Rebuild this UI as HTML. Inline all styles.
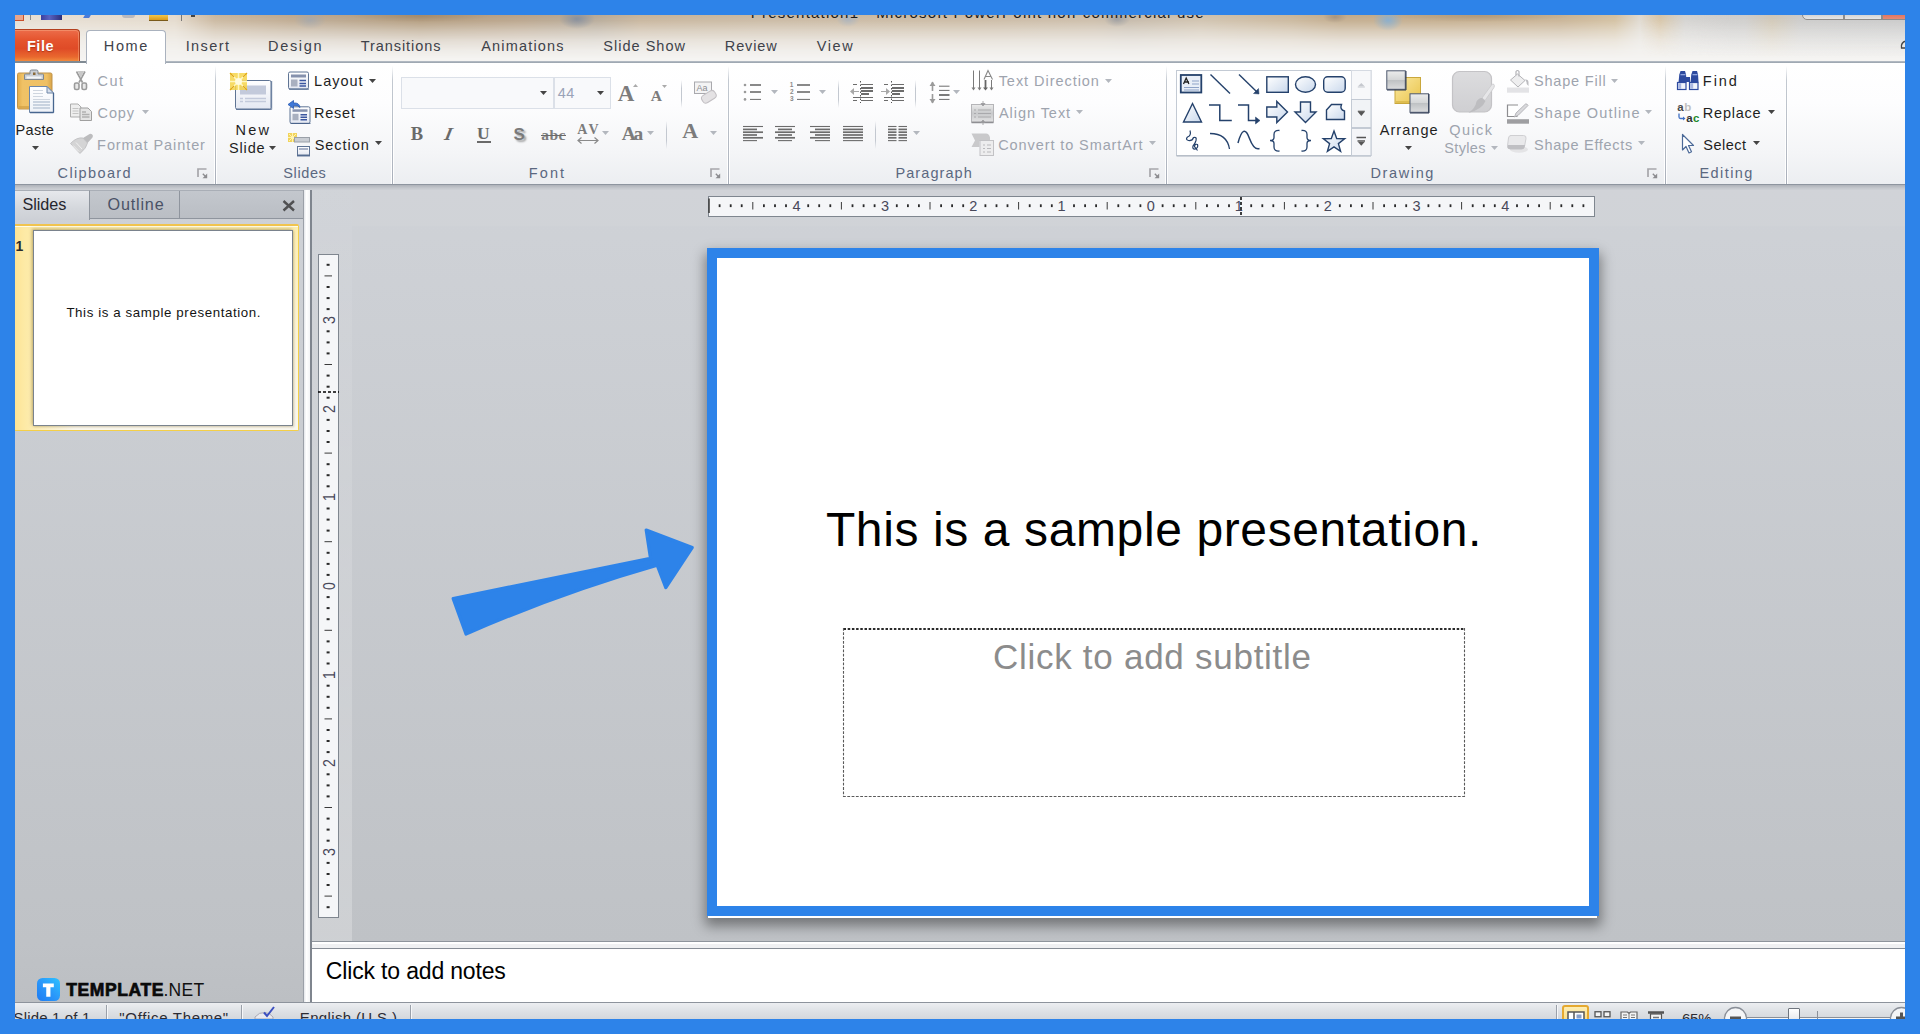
<!DOCTYPE html>
<html lang="en"><head><meta charset="utf-8"><title>PowerPoint</title>
<style>
html,body{margin:0;padding:0;}
body{width:1920px;height:1034px;background:#2d83e9;overflow:hidden;position:relative;font-family:"Liberation Sans",sans-serif;}
.a{position:absolute;display:block;}
.t{position:absolute;white-space:nowrap;display:block;}
#app{position:absolute;left:0;top:0;width:1920px;height:1034px;overflow:hidden;}
.fr{position:absolute;background:#2d83e9;z-index:50;}
</style></head>
<body>
<div id="app">
<div class="a" style="left:15px;top:15px;width:1890px;height:47px;background:#f5f4f2;"></div>
<div class="a" style="left:15px;top:15px;width:1890px;height:44px;background:linear-gradient(to right,#e6ded2 0px,#e4dacc 160px,#c9b69d 200px,#bda88e 275px,#b9a58c 310px,#b09879 405px,#b8a288 505px,#b5a896 580px,#c6b39a 625px,#c9b8a1 745px,#cab9a2 945px,#cbbca8 1080px,#c4b8a8 1113px,#cfc1ad 1185px,#c9b69b 1275px,#c1aa8a 1325px,#c3ab8a 1435px,#c7b192 1545px,#d2bf9f 1600px,#dfd9d0 1625px,#d9c4a2 1645px,#d9d7d4 1670px,#d8d6d3 1730px,#dccaa8 1757px,#d2d1cf 1785px,#cfcfcf 1875px);-webkit-mask-image:linear-gradient(to bottom,rgba(0,0,0,1) 0px,rgba(0,0,0,.9) 6px,rgba(0,0,0,.55) 16px,rgba(0,0,0,.25) 26px,rgba(0,0,0,.08) 36px,rgba(0,0,0,0) 44px);mask-image:linear-gradient(to bottom,rgba(0,0,0,1) 0px,rgba(0,0,0,.9) 6px,rgba(0,0,0,.55) 16px,rgba(0,0,0,.25) 26px,rgba(0,0,0,.08) 36px,rgba(0,0,0,0) 44px);"></div>
<div class="a" style="left:1640px;top:15px;width:265px;height:42px;background:linear-gradient(to bottom,rgba(196,196,196,.55),rgba(210,210,210,.35) 45%,rgba(230,228,226,0));-webkit-mask-image:linear-gradient(to right,transparent,#000 90px);mask-image:linear-gradient(to right,transparent,#000 90px);"></div>
<div class="a" style="left:294px;top:11px;width:32px;height:18px;background:radial-gradient(closest-side,rgba(150,165,185,.55),rgba(255,255,255,0));"></div>
<div class="a" style="left:559px;top:9px;width:36px;height:20px;background:radial-gradient(closest-side,rgba(110,130,160,.65),rgba(255,255,255,0));"></div>
<div class="a" style="left:836px;top:11px;width:24px;height:16px;background:radial-gradient(closest-side,rgba(150,175,205,.6),rgba(255,255,255,0));"></div>
<div class="a" style="left:1104px;top:11px;width:26px;height:16px;background:radial-gradient(closest-side,rgba(130,140,155,.6),rgba(255,255,255,0));"></div>
<div class="a" style="left:1373px;top:9px;width:30px;height:22px;background:radial-gradient(closest-side,rgba(120,175,225,.75),rgba(255,255,255,0));"></div>
<div class="a" style="left:1323px;top:11px;width:24px;height:12px;background:radial-gradient(closest-side,rgba(120,110,105,.4),rgba(255,255,255,0));"></div>
<div class="a" style="left:350px;top:10px;width:140px;height:12px;background:radial-gradient(closest-side,rgba(120,95,65,.25),rgba(255,255,255,0));"></div>
<div class="a" style="left:1390px;top:10px;width:180px;height:12px;background:radial-gradient(closest-side,rgba(120,95,65,.25),rgba(255,255,255,0));"></div>
<div class="a" style="left:15px;top:61.3px;width:1890px;height:1.9px;background:linear-gradient(to bottom,#b9c0c8,#97a1ab);"></div>
<div class="a" style="left:15px;top:63px;width:1890px;height:121px;background:linear-gradient(to bottom,#ffffff 0px,#fdfdfe 40px,#f4f5f7 90px,#eceef1 121px);"></div>
<div class="a" style="left:15px;top:184px;width:1890px;height:1px;background:#8e959f;"></div>
<div class="a" style="left:15px;top:185px;width:1890px;height:5px;background:linear-gradient(to bottom,#aeb2b9,#c4c7cc 60%,#cdd0d5);"></div>
<div class="a" style="left:15px;top:190px;width:1890px;height:813px;background:linear-gradient(to bottom,#cfd2d7,#bfc2c6 752px,#bcbfc3);"></div>
<div class="a" style="left:401px;top:77px;width:152.5px;height:31.5px;background:#f8f9fb;border:1.600px solid #dbe0e8;box-sizing:border-box;"></div>
<div class="a" style="left:553.5px;top:77px;width:57.5px;height:31.5px;background:#f8f9fb;border:1.600px solid #dbe0e8;box-sizing:border-box;"></div>
<span class="t" style="left:750.77px;top:3px;font:400 15px/20px 'Liberation Sans',sans-serif;color:#1a1a1a;letter-spacing:1.223px;">Presentation1 - Microsoft PowerPoint non-commercial use</span>
<div class="a" style="left:15px;top:15px;width:8px;height:5px;background:#e9a58a;border-right:1px solid #c9502a;border-bottom:1px solid #c9502a;"></div>
<div class="a" style="left:30px;top:15px;width:1px;height:5px;background:#8a8a8a;"></div>
<div class="a" style="left:41px;top:15px;width:21px;height:5px;background:linear-gradient(to right,#3b3f9e,#5a63c0 40%,#2c2f7a);"></div>
<div class="a" style="left:84px;top:15px;width:6px;height:3px;background:#4a7bd8;transform:skewX(-30deg);"></div>
<div class="a" style="left:122px;top:15px;width:13px;height:3px;background:#b9b9bd;border-radius:0 0 6px 6px;"></div>
<div class="a" style="left:149px;top:15px;width:19px;height:5px;background:linear-gradient(to bottom,#f2c54a,#d99a1c);border-bottom:1px solid #7a5a1a;"></div>
<div class="a" style="left:181px;top:15px;width:1px;height:6px;background:#777;"></div>
<div class="a" style="left:191px;top:15px;width:4px;height:2px;background:#444;"></div>
<div class="a" style="left:1802px;top:10px;width:104px;height:10px;background:linear-gradient(to bottom,#c4c4c4,#e6e6e6);border:1px solid #8d8b88;border-radius:0 0 0 5px;box-sizing:border-box;"></div>
<div class="a" style="left:1843px;top:10px;width:1.5px;height:9px;background:#8f8d8b;"></div>
<div class="a" style="left:1881px;top:10px;width:1.5px;height:9px;background:#8f8d8b;"></div>
<div class="a" style="left:1882.5px;top:10px;width:24px;height:9px;background:linear-gradient(to bottom,#d9604a,#e58a75);"></div>
<div class="a" style="left:10px;top:29px;width:70px;height:33px;background:linear-gradient(to bottom,#ec6c4a 0%,#e5552f 30%,#df4b27 58%,#e9682e 84%,#f3923f 100%);border:1px solid #b3401e;border-bottom:none;border-radius:0 4px 0 0;box-sizing:border-box;box-shadow:inset 0 0 0 1px rgba(255,200,160,.35);"></div>
<span class="t" style="left:27.03px;top:37px;font:700 14.5px/19px 'Liberation Sans',sans-serif;color:#ffffff;letter-spacing:0.496px;text-shadow:0 1px 1px rgba(120,30,0,.5);">File</span>
<div class="a" style="left:15px;top:61px;width:72px;height:1.8px;background:#808a93;"></div>
<div class="a" style="left:86px;top:30px;width:80px;height:34px;background:#ffffff;border:1px solid #aab2be;border-bottom:none;border-radius:4px 4px 0 0;box-sizing:border-box;"></div>
<span class="t" style="left:103.81px;top:37px;font:400 14.5px/19px 'Liberation Sans',sans-serif;color:#3e424a;letter-spacing:1.618px;">Home</span>
<span class="t" style="left:185.66px;top:37px;font:400 14.5px/19px 'Liberation Sans',sans-serif;color:#3e424a;letter-spacing:1.436px;">Insert</span>
<span class="t" style="left:268.11px;top:37px;font:400 14.5px/19px 'Liberation Sans',sans-serif;color:#3e424a;letter-spacing:1.639px;">Design</span>
<span class="t" style="left:360.67px;top:37px;font:400 14.5px/19px 'Liberation Sans',sans-serif;color:#3e424a;letter-spacing:0.947px;">Transitions</span>
<span class="t" style="left:481.27px;top:37px;font:400 14.5px/19px 'Liberation Sans',sans-serif;color:#3e424a;letter-spacing:1.169px;">Animations</span>
<span class="t" style="left:603.34px;top:37px;font:400 14.5px/19px 'Liberation Sans',sans-serif;color:#3e424a;letter-spacing:1.009px;">Slide Show</span>
<span class="t" style="left:724.81px;top:37px;font:400 14.5px/19px 'Liberation Sans',sans-serif;color:#3e424a;letter-spacing:0.862px;">Review</span>
<span class="t" style="left:816.64px;top:37px;font:400 14.5px/19px 'Liberation Sans',sans-serif;color:#3e424a;letter-spacing:1.620px;">View</span>
<svg class="a" style="left:1899px;top:40px;" width="8" height="12" viewBox="0 0 8 12"><path d="M7 1 C3 2 2 5 2.5 8 L7 8" fill="none" stroke="#444" stroke-width="1.3"/></svg>
<span class="t" style="left:15.51px;top:121px;font:400 14.5px/19px 'Liberation Sans',sans-serif;color:#1f1f1f;letter-spacing:0.339px;">Paste</span>
<span class="t" style="left:97.56px;top:72px;font:400 14.5px/19px 'Liberation Sans',sans-serif;color:#9ea4ae;letter-spacing:1.489px;">Cut</span>
<span class="t" style="left:97.56px;top:104px;font:400 14.5px/19px 'Liberation Sans',sans-serif;color:#9ea4ae;letter-spacing:0.872px;">Copy</span>
<span class="t" style="left:97.11px;top:136px;font:400 14.5px/19px 'Liberation Sans',sans-serif;color:#9ea4ae;letter-spacing:0.918px;">Format Painter</span>
<span class="t" style="left:57.56px;top:164px;font:400 14.5px/19px 'Liberation Sans',sans-serif;color:#5b6880;letter-spacing:1.376px;">Clipboard</span>
<span class="t" style="left:235.51px;top:121px;font:400 14.5px/19px 'Liberation Sans',sans-serif;color:#1f1f1f;letter-spacing:2.223px;">New</span>
<span class="t" style="left:229.04px;top:139px;font:400 14.5px/19px 'Liberation Sans',sans-serif;color:#1f1f1f;letter-spacing:0.840px;">Slide</span>
<span class="t" style="left:314.11px;top:72px;font:400 14.5px/19px 'Liberation Sans',sans-serif;color:#1f1f1f;letter-spacing:0.992px;">Layout</span>
<span class="t" style="left:314.11px;top:104px;font:400 14.5px/19px 'Liberation Sans',sans-serif;color:#1f1f1f;letter-spacing:0.704px;">Reset</span>
<span class="t" style="left:314.64px;top:136px;font:400 14.5px/19px 'Liberation Sans',sans-serif;color:#1f1f1f;letter-spacing:0.989px;">Section</span>
<span class="t" style="left:283.34px;top:164px;font:400 14.5px/19px 'Liberation Sans',sans-serif;color:#5b6880;letter-spacing:0.598px;">Slides</span>
<span class="t" style="left:557.67px;top:84px;font:400 14.5px/19px 'Liberation Sans',sans-serif;color:#9aa3b8;letter-spacing:0.629px;">44</span>
<span class="t" style="left:528.81px;top:164px;font:400 14.5px/19px 'Liberation Sans',sans-serif;color:#5b6880;letter-spacing:2.094px;">Font</span>
<span class="t" style="left:998.67px;top:72px;font:400 14.5px/19px 'Liberation Sans',sans-serif;color:#9ea4ae;letter-spacing:0.956px;">Text Direction</span>
<span class="t" style="left:998.97px;top:104px;font:400 14.5px/19px 'Liberation Sans',sans-serif;color:#9ea4ae;letter-spacing:0.948px;">Align Text</span>
<span class="t" style="left:998.26px;top:136px;font:400 14.5px/19px 'Liberation Sans',sans-serif;color:#9ea4ae;letter-spacing:0.901px;">Convert to SmartArt</span>
<span class="t" style="left:895.51px;top:164px;font:400 14.5px/19px 'Liberation Sans',sans-serif;color:#5b6880;letter-spacing:1.065px;">Paragraph</span>
<span class="t" style="left:1379.67px;top:121px;font:400 14.5px/19px 'Liberation Sans',sans-serif;color:#1f1f1f;letter-spacing:1.064px;">Arrange</span>
<span class="t" style="left:1449.31px;top:121px;font:400 14.5px/19px 'Liberation Sans',sans-serif;color:#9ea4ae;letter-spacing:1.400px;">Quick</span>
<span class="t" style="left:1444.34px;top:139px;font:400 14.5px/19px 'Liberation Sans',sans-serif;color:#9ea4ae;letter-spacing:0.339px;">Styles</span>
<span class="t" style="left:1534.04px;top:72px;font:400 14.5px/19px 'Liberation Sans',sans-serif;color:#9ea4ae;letter-spacing:0.794px;">Shape Fill</span>
<span class="t" style="left:1534.04px;top:104px;font:400 14.5px/19px 'Liberation Sans',sans-serif;color:#9ea4ae;letter-spacing:1.142px;">Shape Outline</span>
<span class="t" style="left:1534.04px;top:136px;font:400 14.5px/19px 'Liberation Sans',sans-serif;color:#9ea4ae;letter-spacing:0.680px;">Shape Effects</span>
<span class="t" style="left:1370.51px;top:164px;font:400 14.5px/19px 'Liberation Sans',sans-serif;color:#5b6880;letter-spacing:1.623px;">Drawing</span>
<span class="t" style="left:1702.81px;top:72px;font:400 14.5px/19px 'Liberation Sans',sans-serif;color:#1f1f1f;letter-spacing:1.972px;">Find</span>
<span class="t" style="left:1702.81px;top:104px;font:400 14.5px/19px 'Liberation Sans',sans-serif;color:#1f1f1f;letter-spacing:0.772px;">Replace</span>
<span class="t" style="left:1703.34px;top:136px;font:400 14.5px/19px 'Liberation Sans',sans-serif;color:#1f1f1f;letter-spacing:0.493px;">Select</span>
<span class="t" style="left:1699.41px;top:164px;font:400 14.5px/19px 'Liberation Sans',sans-serif;color:#5b6880;letter-spacing:1.448px;">Editing</span>
<svg class="a" style="left:31.5px;top:146px;" width="7" height="4" viewBox="0 0 7 4"><path d="M0 0H7L3.5 4Z" fill="#444"/></svg>
<svg class="a" style="left:142px;top:110px;" width="7" height="4" viewBox="0 0 7 4"><path d="M0 0H7L3.5 4Z" fill="#b3b7be"/></svg>
<svg class="a" style="left:269.3px;top:146px;" width="7" height="4" viewBox="0 0 7 4"><path d="M0 0H7L3.5 4Z" fill="#444"/></svg>
<svg class="a" style="left:369px;top:79px;" width="7" height="4" viewBox="0 0 7 4"><path d="M0 0H7L3.5 4Z" fill="#444"/></svg>
<svg class="a" style="left:375px;top:141px;" width="7" height="4" viewBox="0 0 7 4"><path d="M0 0H7L3.5 4Z" fill="#444"/></svg>
<svg class="a" style="left:539.5px;top:90.5px;" width="7" height="4" viewBox="0 0 7 4"><path d="M0 0H7L3.5 4Z" fill="#444"/></svg>
<svg class="a" style="left:597px;top:90.5px;" width="7" height="4" viewBox="0 0 7 4"><path d="M0 0H7L3.5 4Z" fill="#444"/></svg>
<svg class="a" style="left:602px;top:131px;" width="7" height="4" viewBox="0 0 7 4"><path d="M0 0H7L3.5 4Z" fill="#b3b7be"/></svg>
<svg class="a" style="left:647px;top:131px;" width="7" height="4" viewBox="0 0 7 4"><path d="M0 0H7L3.5 4Z" fill="#b3b7be"/></svg>
<svg class="a" style="left:710px;top:131px;" width="7" height="4" viewBox="0 0 7 4"><path d="M0 0H7L3.5 4Z" fill="#b3b7be"/></svg>
<svg class="a" style="left:771px;top:90px;" width="7" height="4" viewBox="0 0 7 4"><path d="M0 0H7L3.5 4Z" fill="#b3b7be"/></svg>
<svg class="a" style="left:818.5px;top:90px;" width="7" height="4" viewBox="0 0 7 4"><path d="M0 0H7L3.5 4Z" fill="#b3b7be"/></svg>
<svg class="a" style="left:953px;top:90px;" width="7" height="4" viewBox="0 0 7 4"><path d="M0 0H7L3.5 4Z" fill="#b3b7be"/></svg>
<svg class="a" style="left:913px;top:131px;" width="7" height="4" viewBox="0 0 7 4"><path d="M0 0H7L3.5 4Z" fill="#b3b7be"/></svg>
<svg class="a" style="left:1105px;top:79px;" width="7" height="4" viewBox="0 0 7 4"><path d="M0 0H7L3.5 4Z" fill="#b3b7be"/></svg>
<svg class="a" style="left:1076px;top:110px;" width="7" height="4" viewBox="0 0 7 4"><path d="M0 0H7L3.5 4Z" fill="#b3b7be"/></svg>
<svg class="a" style="left:1149px;top:141px;" width="7" height="4" viewBox="0 0 7 4"><path d="M0 0H7L3.5 4Z" fill="#b3b7be"/></svg>
<svg class="a" style="left:1405px;top:146px;" width="7" height="4" viewBox="0 0 7 4"><path d="M0 0H7L3.5 4Z" fill="#444"/></svg>
<svg class="a" style="left:1491px;top:146px;" width="7" height="4" viewBox="0 0 7 4"><path d="M0 0H7L3.5 4Z" fill="#b3b7be"/></svg>
<svg class="a" style="left:1611px;top:79px;" width="7" height="4" viewBox="0 0 7 4"><path d="M0 0H7L3.5 4Z" fill="#b3b7be"/></svg>
<svg class="a" style="left:1645px;top:110px;" width="7" height="4" viewBox="0 0 7 4"><path d="M0 0H7L3.5 4Z" fill="#b3b7be"/></svg>
<svg class="a" style="left:1638px;top:141px;" width="7" height="4" viewBox="0 0 7 4"><path d="M0 0H7L3.5 4Z" fill="#b3b7be"/></svg>
<svg class="a" style="left:1768px;top:110px;" width="7" height="4" viewBox="0 0 7 4"><path d="M0 0H7L3.5 4Z" fill="#444"/></svg>
<svg class="a" style="left:1753px;top:141px;" width="7" height="4" viewBox="0 0 7 4"><path d="M0 0H7L3.5 4Z" fill="#444"/></svg>
<div class="a" style="left:215px;top:66px;width:1px;height:118px;background:linear-gradient(to bottom,rgba(160,168,180,0),#c3c9d1 12%,#b0b6c0 85%,#a6adb8);"></div>
<div class="a" style="left:216px;top:66px;width:1px;height:118px;background:linear-gradient(to bottom,rgba(255,255,255,0),#ffffff 20%);"></div>
<div class="a" style="left:214px;top:66px;width:1px;height:118px;background:linear-gradient(to bottom,rgba(255,255,255,0),#ffffff 20%);"></div>
<div class="a" style="left:392px;top:66px;width:1px;height:118px;background:linear-gradient(to bottom,rgba(160,168,180,0),#c3c9d1 12%,#b0b6c0 85%,#a6adb8);"></div>
<div class="a" style="left:393px;top:66px;width:1px;height:118px;background:linear-gradient(to bottom,rgba(255,255,255,0),#ffffff 20%);"></div>
<div class="a" style="left:391px;top:66px;width:1px;height:118px;background:linear-gradient(to bottom,rgba(255,255,255,0),#ffffff 20%);"></div>
<div class="a" style="left:728px;top:66px;width:1px;height:118px;background:linear-gradient(to bottom,rgba(160,168,180,0),#c3c9d1 12%,#b0b6c0 85%,#a6adb8);"></div>
<div class="a" style="left:729px;top:66px;width:1px;height:118px;background:linear-gradient(to bottom,rgba(255,255,255,0),#ffffff 20%);"></div>
<div class="a" style="left:727px;top:66px;width:1px;height:118px;background:linear-gradient(to bottom,rgba(255,255,255,0),#ffffff 20%);"></div>
<div class="a" style="left:1166px;top:66px;width:1px;height:118px;background:linear-gradient(to bottom,rgba(160,168,180,0),#c3c9d1 12%,#b0b6c0 85%,#a6adb8);"></div>
<div class="a" style="left:1167px;top:66px;width:1px;height:118px;background:linear-gradient(to bottom,rgba(255,255,255,0),#ffffff 20%);"></div>
<div class="a" style="left:1165px;top:66px;width:1px;height:118px;background:linear-gradient(to bottom,rgba(255,255,255,0),#ffffff 20%);"></div>
<div class="a" style="left:1665px;top:66px;width:1px;height:118px;background:linear-gradient(to bottom,rgba(160,168,180,0),#c3c9d1 12%,#b0b6c0 85%,#a6adb8);"></div>
<div class="a" style="left:1666px;top:66px;width:1px;height:118px;background:linear-gradient(to bottom,rgba(255,255,255,0),#ffffff 20%);"></div>
<div class="a" style="left:1664px;top:66px;width:1px;height:118px;background:linear-gradient(to bottom,rgba(255,255,255,0),#ffffff 20%);"></div>
<div class="a" style="left:1786px;top:66px;width:1px;height:118px;background:linear-gradient(to bottom,rgba(160,168,180,0),#c3c9d1 12%,#b0b6c0 85%,#a6adb8);"></div>
<div class="a" style="left:1787px;top:66px;width:1px;height:118px;background:linear-gradient(to bottom,rgba(255,255,255,0),#ffffff 20%);"></div>
<div class="a" style="left:1785px;top:66px;width:1px;height:118px;background:linear-gradient(to bottom,rgba(255,255,255,0),#ffffff 20%);"></div>
<div class="a" style="left:681px;top:80px;width:1px;height:28px;background:linear-gradient(to bottom,rgba(190,195,203,0),#c3c8d0 30%,#c3c8d0 70%,rgba(190,195,203,0));"></div>
<div class="a" style="left:666px;top:121px;width:1px;height:28px;background:linear-gradient(to bottom,rgba(190,195,203,0),#c3c8d0 30%,#c3c8d0 70%,rgba(190,195,203,0));"></div>
<div class="a" style="left:838px;top:80px;width:1px;height:28px;background:linear-gradient(to bottom,rgba(190,195,203,0),#c3c8d0 30%,#c3c8d0 70%,rgba(190,195,203,0));"></div>
<div class="a" style="left:915px;top:80px;width:1px;height:28px;background:linear-gradient(to bottom,rgba(190,195,203,0),#c3c8d0 30%,#c3c8d0 70%,rgba(190,195,203,0));"></div>
<div class="a" style="left:875px;top:121px;width:1px;height:28px;background:linear-gradient(to bottom,rgba(190,195,203,0),#c3c8d0 30%,#c3c8d0 70%,rgba(190,195,203,0));"></div>
<svg class="a" style="left:196.7px;top:167.7px;" width="11" height="11" viewBox="0 0 11 11"><path d="M1 9V1H9.500" fill="none" stroke="#a6a6aa" stroke-width="1.700"/><path d="M10.200 5.500V10.200H5.500Z" fill="#8c8c90"/><path d="M5.800 5.800L8.500 8.500" stroke="#8c8c90" stroke-width="1.400"/></svg>
<svg class="a" style="left:709.7px;top:167.7px;" width="11" height="11" viewBox="0 0 11 11"><path d="M1 9V1H9.500" fill="none" stroke="#a6a6aa" stroke-width="1.700"/><path d="M10.200 5.500V10.200H5.500Z" fill="#8c8c90"/><path d="M5.800 5.800L8.500 8.500" stroke="#8c8c90" stroke-width="1.400"/></svg>
<svg class="a" style="left:1148.7px;top:167.7px;" width="11" height="11" viewBox="0 0 11 11"><path d="M1 9V1H9.500" fill="none" stroke="#a6a6aa" stroke-width="1.700"/><path d="M10.200 5.500V10.200H5.500Z" fill="#8c8c90"/><path d="M5.800 5.800L8.500 8.500" stroke="#8c8c90" stroke-width="1.400"/></svg>
<svg class="a" style="left:1646.7px;top:167.7px;" width="11" height="11" viewBox="0 0 11 11"><path d="M1 9V1H9.500" fill="none" stroke="#a6a6aa" stroke-width="1.700"/><path d="M10.200 5.500V10.200H5.500Z" fill="#8c8c90"/><path d="M5.800 5.800L8.500 8.500" stroke="#8c8c90" stroke-width="1.400"/></svg>
<span class="t" style="left:410.69px;top:122px;font:700 18.5px/24px 'Liberation Serif',serif;color:#6a6a6a;letter-spacing:0.000px;">B</span>
<span class="t" style="left:445.38px;top:122px;font:italic 700 18.5px/24px 'Liberation Serif',serif;color:#6a6a6a;letter-spacing:0.000px;transform:skewX(-12deg);">I</span>
<span class="t" style="left:477.06px;top:122px;font:700 17.5px/23px 'Liberation Serif',serif;color:#6a6a6a;letter-spacing:0.000px;">U</span>
<div class="a" style="left:477px;top:141px;width:14px;height:1.5px;background:#6a6a6a;"></div>
<span class="t" style="left:513.51px;top:124px;font:700 17px/22px 'Liberation Sans',sans-serif;color:#7a7a7a;letter-spacing:0.000px;text-shadow:2px 2px 2px rgba(0,0,0,.35);">S</span>
<span class="t" style="left:541.20px;top:125px;font:700 15.5px/20px 'Liberation Serif',serif;color:#7c7c7c;letter-spacing:0.468px;">abc</span>
<div class="a" style="left:541px;top:134.5px;width:25px;height:1px;background:#6a6a6a;"></div>
<span class="t" style="left:577.36px;top:121px;font:700 14px/18px 'Liberation Serif',serif;color:#7c7c7c;letter-spacing:2.878px;">AV</span>
<svg class="a" style="left:577px;top:137px;" width="22" height="7" viewBox="0 0 22 7"><path d="M1 3.5H21M4.5 0.5L1 3.5L4.5 6.5M17.5 0.5L21 3.5L17.5 6.5" fill="none" stroke="#8a8a8a" stroke-width="1.2"/></svg>
<span class="t" style="left:621.81px;top:121px;font:700 19.5px/25px 'Liberation Serif',serif;color:#7c7c7c;letter-spacing:-2.347px;">Aa</span>
<span class="t" style="left:682.29px;top:116px;font:700 22px/29px 'Liberation Serif',serif;color:#7c7c7c;letter-spacing:0.000px;">A</span>
<span class="t" style="left:617.78px;top:79px;font:700 23px/30px 'Liberation Serif',serif;color:#7c7c7c;letter-spacing:0.000px;">A</span>
<span class="t" style="left:650.85px;top:86px;font:700 15.5px/20px 'Liberation Serif',serif;color:#7c7c7c;letter-spacing:0.000px;">A</span>
<svg class="a" style="left:632.5px;top:84px;" width="5" height="3" viewBox="0 0 5 3"><path d="M0 3H5L2.5 0Z" fill="#aaa"/></svg>
<svg class="a" style="left:662px;top:85px;" width="5" height="3" viewBox="0 0 5 3"><path d="M0 0H5L2.5 3Z" fill="#aaa"/></svg>
<div class="a" style="left:15px;top:190px;width:288px;height:29px;background:linear-gradient(to bottom,#c3c7cd,#babec4);border-top:1px solid #a9aeb6;border-bottom:1px solid #8f959e;box-sizing:border-box;"></div>
<div class="a" style="left:15px;top:190px;width:75px;height:30px;background:linear-gradient(to bottom,#e6e8ec,#d4d7dc 60%,#cdd0d6);border-top:1px solid #a9aeb6;border-right:1px solid #8f959e;box-sizing:border-box;"></div>
<div class="a" style="left:179px;top:191px;width:1px;height:27px;background:#8f959e;"></div>
<span class="t" style="left:22.56px;top:194px;font:400 16.2px/21px 'Liberation Sans',sans-serif;color:#26262e;letter-spacing:-0.060px;">Slides</span>
<span class="t" style="left:107.53px;top:194px;font:400 16.2px/21px 'Liberation Sans',sans-serif;color:#4a5266;letter-spacing:0.810px;">Outline</span>
<svg class="a" style="left:282px;top:199px;" width="14" height="13" viewBox="0 0 14 13"><path d="M1.500 2L12 11.500M12 2L1.500 11.500" stroke="#505052" stroke-width="2.400"/></svg>
<div class="a" style="left:303px;top:190px;width:1px;height:813px;background:#9ba0a8;"></div>
<div class="a" style="left:304px;top:190px;width:6px;height:813px;background:linear-gradient(to right,#e3e5e9,#ffffff 40%,#f2f3f5);"></div>
<div class="a" style="left:310px;top:190px;width:1.5px;height:813px;background:#7f858e;"></div>
<div class="a" style="left:15px;top:224px;width:283.5px;height:206.5px;background:linear-gradient(to right,#fde496 0px,#fdeaa6 10px,rgba(253,238,176,0) 60px),linear-gradient(to bottom,#fdeeb0 0px,#fcf0c0 40px,#faf4dc 120px,#f9f7ee 200px);border-top:2px solid #f1c44e;border-right:1.300px solid #f4cf48;border-bottom:1.300px solid #f4cf48;border-radius:0 2px 2px 0;box-sizing:border-box;box-shadow:inset 0 1px 0 0 rgba(255,252,235,.95);"></div>
<div class="a" style="left:33px;top:230px;width:260px;height:195.5px;background:#ffffff;border:1px solid #7a838d;border-right-width:1.400px;border-bottom-width:1.400px;box-sizing:border-box;box-shadow:-1px -1px 3px 0 rgba(125,105,45,.5),1px 1px 2px 0 rgba(125,105,45,.25);"></div>
<span class="t" style="left:15.42px;top:237px;font:700 14px/18px 'Liberation Sans',sans-serif;color:#2a2a2a;letter-spacing:0.000px;">1</span>
<span class="t" style="left:66.40px;top:304px;font:400 13.3px/17px 'Liberation Sans',sans-serif;color:#141414;letter-spacing:0.601px;">This is a sample presentation.</span>
<div class="a" style="left:311.5px;top:190px;width:40.5px;height:752px;background:linear-gradient(to bottom,rgba(255,255,255,.04),rgba(255,255,255,.10) 30%,rgba(255,255,255,.24));"></div>
<div class="a" style="left:352px;top:190px;width:1553px;height:36px;background:rgba(255,255,255,.045);"></div>
<svg class="a" style="left:708px;top:196px;" width="887" height="21" viewBox="0 0 887 21"><rect x="0.500" y="0.500" width="886" height="20" fill="#f5f6f8" stroke="#7f868f" stroke-width="1"/><rect x="10.7" y="8.300" width="1.800" height="2.800" fill="#2a2a2a"/><rect x="21.8" y="8.300" width="1.800" height="2.800" fill="#2a2a2a"/><rect x="32.8" y="8.300" width="1.800" height="2.800" fill="#2a2a2a"/><path d="M44.8 6V13.500" stroke="#3a3a3a" stroke-width="1"/><rect x="55.0" y="8.300" width="1.800" height="2.800" fill="#2a2a2a"/><rect x="66.1" y="8.300" width="1.800" height="2.800" fill="#2a2a2a"/><rect x="77.1" y="8.300" width="1.800" height="2.800" fill="#2a2a2a"/><rect x="99.3" y="8.300" width="1.800" height="2.800" fill="#2a2a2a"/><rect x="110.3" y="8.300" width="1.800" height="2.800" fill="#2a2a2a"/><rect x="121.4" y="8.300" width="1.800" height="2.800" fill="#2a2a2a"/><path d="M133.4 6V13.500" stroke="#3a3a3a" stroke-width="1"/><rect x="143.6" y="8.300" width="1.800" height="2.800" fill="#2a2a2a"/><rect x="154.7" y="8.300" width="1.800" height="2.800" fill="#2a2a2a"/><rect x="165.7" y="8.300" width="1.800" height="2.800" fill="#2a2a2a"/><rect x="187.9" y="8.300" width="1.800" height="2.800" fill="#2a2a2a"/><rect x="199.0" y="8.300" width="1.800" height="2.800" fill="#2a2a2a"/><rect x="210.0" y="8.300" width="1.800" height="2.800" fill="#2a2a2a"/><path d="M222.0 6V13.500" stroke="#3a3a3a" stroke-width="1"/><rect x="232.2" y="8.300" width="1.800" height="2.800" fill="#2a2a2a"/><rect x="243.2" y="8.300" width="1.800" height="2.800" fill="#2a2a2a"/><rect x="254.3" y="8.300" width="1.800" height="2.800" fill="#2a2a2a"/><rect x="276.5" y="8.300" width="1.800" height="2.800" fill="#2a2a2a"/><rect x="287.6" y="8.300" width="1.800" height="2.800" fill="#2a2a2a"/><rect x="298.6" y="8.300" width="1.800" height="2.800" fill="#2a2a2a"/><path d="M310.6 6V13.500" stroke="#3a3a3a" stroke-width="1"/><rect x="320.8" y="8.300" width="1.800" height="2.800" fill="#2a2a2a"/><rect x="331.9" y="8.300" width="1.800" height="2.800" fill="#2a2a2a"/><rect x="342.9" y="8.300" width="1.800" height="2.800" fill="#2a2a2a"/><rect x="365.1" y="8.300" width="1.800" height="2.800" fill="#2a2a2a"/><rect x="376.2" y="8.300" width="1.800" height="2.800" fill="#2a2a2a"/><rect x="387.2" y="8.300" width="1.800" height="2.800" fill="#2a2a2a"/><path d="M399.2 6V13.500" stroke="#3a3a3a" stroke-width="1"/><rect x="409.4" y="8.300" width="1.800" height="2.800" fill="#2a2a2a"/><rect x="420.5" y="8.300" width="1.800" height="2.800" fill="#2a2a2a"/><rect x="431.5" y="8.300" width="1.800" height="2.800" fill="#2a2a2a"/><rect x="453.7" y="8.300" width="1.800" height="2.800" fill="#2a2a2a"/><rect x="464.8" y="8.300" width="1.800" height="2.800" fill="#2a2a2a"/><rect x="475.8" y="8.300" width="1.800" height="2.800" fill="#2a2a2a"/><path d="M487.8 6V13.500" stroke="#3a3a3a" stroke-width="1"/><rect x="498.0" y="8.300" width="1.800" height="2.800" fill="#2a2a2a"/><rect x="509.1" y="8.300" width="1.800" height="2.800" fill="#2a2a2a"/><rect x="520.1" y="8.300" width="1.800" height="2.800" fill="#2a2a2a"/><rect x="542.3" y="8.300" width="1.800" height="2.800" fill="#2a2a2a"/><rect x="553.4" y="8.300" width="1.800" height="2.800" fill="#2a2a2a"/><rect x="564.4" y="8.300" width="1.800" height="2.800" fill="#2a2a2a"/><path d="M576.4 6V13.500" stroke="#3a3a3a" stroke-width="1"/><rect x="586.6" y="8.300" width="1.800" height="2.800" fill="#2a2a2a"/><rect x="597.6" y="8.300" width="1.800" height="2.800" fill="#2a2a2a"/><rect x="608.7" y="8.300" width="1.800" height="2.800" fill="#2a2a2a"/><rect x="630.9" y="8.300" width="1.800" height="2.800" fill="#2a2a2a"/><rect x="642.0" y="8.300" width="1.800" height="2.800" fill="#2a2a2a"/><rect x="653.0" y="8.300" width="1.800" height="2.800" fill="#2a2a2a"/><path d="M665.0 6V13.500" stroke="#3a3a3a" stroke-width="1"/><rect x="675.2" y="8.300" width="1.800" height="2.800" fill="#2a2a2a"/><rect x="686.2" y="8.300" width="1.800" height="2.800" fill="#2a2a2a"/><rect x="697.3" y="8.300" width="1.800" height="2.800" fill="#2a2a2a"/><rect x="719.5" y="8.300" width="1.800" height="2.800" fill="#2a2a2a"/><rect x="730.6" y="8.300" width="1.800" height="2.800" fill="#2a2a2a"/><rect x="741.6" y="8.300" width="1.800" height="2.800" fill="#2a2a2a"/><path d="M753.6 6V13.500" stroke="#3a3a3a" stroke-width="1"/><rect x="763.8" y="8.300" width="1.800" height="2.800" fill="#2a2a2a"/><rect x="774.9" y="8.300" width="1.800" height="2.800" fill="#2a2a2a"/><rect x="785.9" y="8.300" width="1.800" height="2.800" fill="#2a2a2a"/><rect x="808.1" y="8.300" width="1.800" height="2.800" fill="#2a2a2a"/><rect x="819.1" y="8.300" width="1.800" height="2.800" fill="#2a2a2a"/><rect x="830.2" y="8.300" width="1.800" height="2.800" fill="#2a2a2a"/><path d="M842.2 6V13.500" stroke="#3a3a3a" stroke-width="1"/><rect x="852.4" y="8.300" width="1.800" height="2.800" fill="#2a2a2a"/><rect x="863.4" y="8.300" width="1.800" height="2.800" fill="#2a2a2a"/><rect x="874.5" y="8.300" width="1.800" height="2.800" fill="#2a2a2a"/><path d="M1 2.500V17" stroke="#3a3a3a" stroke-width="1.500"/></svg>
<span class="t" style="left:792.57px;top:197px;font:400 14.5px/19px 'Liberation Sans',sans-serif;color:#48485a;letter-spacing:0.000px;">4</span>
<span class="t" style="left:880.95px;top:197px;font:400 14.5px/19px 'Liberation Sans',sans-serif;color:#48485a;letter-spacing:0.000px;">3</span>
<span class="t" style="left:969.37px;top:197px;font:400 14.5px/19px 'Liberation Sans',sans-serif;color:#48485a;letter-spacing:0.000px;">2</span>
<span class="t" style="left:1057.60px;top:197px;font:400 14.5px/19px 'Liberation Sans',sans-serif;color:#48485a;letter-spacing:0.000px;">1</span>
<span class="t" style="left:1146.73px;top:197px;font:400 14.5px/19px 'Liberation Sans',sans-serif;color:#48485a;letter-spacing:0.000px;">0</span>
<span class="t" style="left:1234.80px;top:197px;font:400 14.5px/19px 'Liberation Sans',sans-serif;color:#48485a;letter-spacing:0.000px;">1</span>
<span class="t" style="left:1323.77px;top:197px;font:400 14.5px/19px 'Liberation Sans',sans-serif;color:#48485a;letter-spacing:0.000px;">2</span>
<span class="t" style="left:1412.55px;top:197px;font:400 14.5px/19px 'Liberation Sans',sans-serif;color:#48485a;letter-spacing:0.000px;">3</span>
<span class="t" style="left:1501.37px;top:197px;font:400 14.5px/19px 'Liberation Sans',sans-serif;color:#48485a;letter-spacing:0.000px;">4</span>
<svg class="a" style="left:1240px;top:197px;" width="2" height="18" viewBox="0 0 2 18"><path d="M1 0V18" stroke="#000" stroke-width="1.500" stroke-dasharray="3 2"/></svg>
<svg class="a" style="left:318px;top:254px;" width="21" height="664" viewBox="0 0 21 664"><rect x="0.500" y="0.500" width="20" height="663" fill="#f5f6f8" stroke="#7f868f" stroke-width="1"/><rect x="8.600" y="9.8" width="3" height="2" fill="#2a2a2a"/><path d="M6.500 21.9H14" stroke="#3a3a3a" stroke-width="1"/><rect x="8.600" y="32.0" width="3" height="2" fill="#2a2a2a"/><rect x="8.600" y="43.1" width="3" height="2" fill="#2a2a2a"/><rect x="8.600" y="54.1" width="3" height="2" fill="#2a2a2a"/><rect x="8.600" y="76.3" width="3" height="2" fill="#2a2a2a"/><rect x="8.600" y="87.4" width="3" height="2" fill="#2a2a2a"/><rect x="8.600" y="98.4" width="3" height="2" fill="#2a2a2a"/><path d="M6.500 110.5H14" stroke="#3a3a3a" stroke-width="1"/><rect x="8.600" y="120.6" width="3" height="2" fill="#2a2a2a"/><rect x="8.600" y="131.7" width="3" height="2" fill="#2a2a2a"/><rect x="8.600" y="142.7" width="3" height="2" fill="#2a2a2a"/><rect x="8.600" y="164.9" width="3" height="2" fill="#2a2a2a"/><rect x="8.600" y="176.0" width="3" height="2" fill="#2a2a2a"/><rect x="8.600" y="187.0" width="3" height="2" fill="#2a2a2a"/><path d="M6.500 199.1H14" stroke="#3a3a3a" stroke-width="1"/><rect x="8.600" y="209.2" width="3" height="2" fill="#2a2a2a"/><rect x="8.600" y="220.2" width="3" height="2" fill="#2a2a2a"/><rect x="8.600" y="231.3" width="3" height="2" fill="#2a2a2a"/><rect x="8.600" y="253.5" width="3" height="2" fill="#2a2a2a"/><rect x="8.600" y="264.6" width="3" height="2" fill="#2a2a2a"/><rect x="8.600" y="275.6" width="3" height="2" fill="#2a2a2a"/><path d="M6.500 287.7H14" stroke="#3a3a3a" stroke-width="1"/><rect x="8.600" y="297.8" width="3" height="2" fill="#2a2a2a"/><rect x="8.600" y="308.9" width="3" height="2" fill="#2a2a2a"/><rect x="8.600" y="319.9" width="3" height="2" fill="#2a2a2a"/><rect x="8.600" y="342.1" width="3" height="2" fill="#2a2a2a"/><rect x="8.600" y="353.1" width="3" height="2" fill="#2a2a2a"/><rect x="8.600" y="364.2" width="3" height="2" fill="#2a2a2a"/><path d="M6.500 376.3H14" stroke="#3a3a3a" stroke-width="1"/><rect x="8.600" y="386.4" width="3" height="2" fill="#2a2a2a"/><rect x="8.600" y="397.4" width="3" height="2" fill="#2a2a2a"/><rect x="8.600" y="408.5" width="3" height="2" fill="#2a2a2a"/><rect x="8.600" y="430.7" width="3" height="2" fill="#2a2a2a"/><rect x="8.600" y="441.8" width="3" height="2" fill="#2a2a2a"/><rect x="8.600" y="452.8" width="3" height="2" fill="#2a2a2a"/><path d="M6.500 464.9H14" stroke="#3a3a3a" stroke-width="1"/><rect x="8.600" y="475.0" width="3" height="2" fill="#2a2a2a"/><rect x="8.600" y="486.0" width="3" height="2" fill="#2a2a2a"/><rect x="8.600" y="497.1" width="3" height="2" fill="#2a2a2a"/><rect x="8.600" y="519.3" width="3" height="2" fill="#2a2a2a"/><rect x="8.600" y="530.4" width="3" height="2" fill="#2a2a2a"/><rect x="8.600" y="541.4" width="3" height="2" fill="#2a2a2a"/><path d="M6.500 553.5H14" stroke="#3a3a3a" stroke-width="1"/><rect x="8.600" y="563.6" width="3" height="2" fill="#2a2a2a"/><rect x="8.600" y="574.6" width="3" height="2" fill="#2a2a2a"/><rect x="8.600" y="585.7" width="3" height="2" fill="#2a2a2a"/><rect x="8.600" y="607.9" width="3" height="2" fill="#2a2a2a"/><rect x="8.600" y="619.0" width="3" height="2" fill="#2a2a2a"/><rect x="8.600" y="630.0" width="3" height="2" fill="#2a2a2a"/><path d="M6.500 642.1H14" stroke="#3a3a3a" stroke-width="1"/><rect x="8.600" y="652.2" width="3" height="2" fill="#2a2a2a"/></svg>
<span class="t" style="left:318.5px;top:310.20000000000005px;width:20px;height:20px;line-height:20px;text-align:center;font:400 15px/20px 'Liberation Sans',sans-serif;color:#48485a;transform:rotate(-90deg) scale(.95,1.12);">3</span>
<span class="t" style="left:318.5px;top:398.8px;width:20px;height:20px;line-height:20px;text-align:center;font:400 15px/20px 'Liberation Sans',sans-serif;color:#48485a;transform:rotate(-90deg) scale(.95,1.12);">2</span>
<span class="t" style="left:318.5px;top:487.4px;width:20px;height:20px;line-height:20px;text-align:center;font:400 15px/20px 'Liberation Sans',sans-serif;color:#48485a;transform:rotate(-90deg) scale(.95,1.12);">1</span>
<span class="t" style="left:318.5px;top:576.0px;width:20px;height:20px;line-height:20px;text-align:center;font:400 15px/20px 'Liberation Sans',sans-serif;color:#48485a;transform:rotate(-90deg) scale(.95,1.12);">0</span>
<span class="t" style="left:318.5px;top:664.6px;width:20px;height:20px;line-height:20px;text-align:center;font:400 15px/20px 'Liberation Sans',sans-serif;color:#48485a;transform:rotate(-90deg) scale(.95,1.12);">1</span>
<span class="t" style="left:318.5px;top:753.2px;width:20px;height:20px;line-height:20px;text-align:center;font:400 15px/20px 'Liberation Sans',sans-serif;color:#48485a;transform:rotate(-90deg) scale(.95,1.12);">2</span>
<span class="t" style="left:318.5px;top:841.8px;width:20px;height:20px;line-height:20px;text-align:center;font:400 15px/20px 'Liberation Sans',sans-serif;color:#48485a;transform:rotate(-90deg) scale(.95,1.12);">3</span>
<svg class="a" style="left:318px;top:390.5px;" width="21" height="2" viewBox="0 0 21 2"><path d="M0 1H21" stroke="#000" stroke-width="1.500" stroke-dasharray="3 2"/></svg>
<div class="a" style="left:711px;top:254px;width:884px;height:661px;background:#ffffff;box-shadow:0 5px 12px 6px rgba(0,0,0,.40);"></div>
<div class="a" style="left:708px;top:910px;width:889px;height:8px;background:#ffffff;"></div>
<div class="a" style="left:707px;top:248px;width:892px;height:668px;background:#ffffff;border:10px solid #2d83e9;box-sizing:border-box;"></div>
<span class="t" style="left:825.92px;top:499px;font:400 48px/62px 'Liberation Sans',sans-serif;color:#000000;letter-spacing:0.614px;">This is a sample presentation.</span>
<svg class="a" style="left:842px;top:627px;" width="624" height="171" viewBox="0 0 624 171"><path d="M1.500 2H623" stroke="#2a2a2a" stroke-width="1.800" stroke-dasharray="2.500 1.700" fill="none"/><path d="M1.500 1V170M622.500 1V170M1 169.500H623" stroke="#5a5a5a" stroke-width="1.100" stroke-dasharray="2.800 1.500" fill="none"/></svg>
<span class="t" style="left:992.92px;top:634px;font:400 35px/46px 'Liberation Sans',sans-serif;color:#8c8c8c;letter-spacing:0.733px;">Click to add subtitle</span>
<svg class="a" style="left:440px;top:515px;" width="270" height="135" viewBox="440 515 270 135"><path d="M453.200 598.600L650.500 558.300L646.200 530L692.200 547.600L665.800 587.600L657.200 565.200Q560 593 466 634Z" fill="#2d83e9" stroke="#2d83e9" stroke-width="3.200" stroke-linejoin="round"/></svg>
<div class="a" style="left:311.5px;top:941px;width:1594px;height:1.3px;background:#8e949c;"></div>
<div class="a" style="left:311.5px;top:942.3px;width:1594px;height:6px;background:linear-gradient(to bottom,#ffffff 0,#ffffff 1.7px,#eff0f2 1.7px,#eff0f2 100%);"></div>
<div class="a" style="left:311.5px;top:947.8px;width:1594px;height:55.2px;background:#ffffff;border-top:1.700px solid #868c95;box-sizing:border-box;"></div>
<span class="t" style="left:325.83px;top:956px;font:400 23px/30px 'Liberation Sans',sans-serif;color:#000000;letter-spacing:-0.166px;">Click to add notes</span>
<div class="a" style="left:15px;top:1001.6px;width:1890px;height:1.6px;background:#8d939c;"></div>
<div class="a" style="left:15px;top:1003px;width:1890px;height:17px;background:linear-gradient(to bottom,#eceef1,#dfe2e6 45%,#d3d6db);"></div>
<span class="t" style="left:13.62px;top:1008px;font:400 15px/20px 'Liberation Sans',sans-serif;color:#2c2c34;letter-spacing:0.142px;">Slide 1 of 1</span>
<span class="t" style="left:119.36px;top:1008px;font:400 15px/20px 'Liberation Sans',sans-serif;color:#2c2c34;letter-spacing:0.664px;">"Office Theme"</span>
<span class="t" style="left:299.77px;top:1008px;font:400 15px/20px 'Liberation Sans',sans-serif;color:#2c2c34;letter-spacing:0.356px;">English (U.S.)</span>
<div class="a" style="left:106px;top:1005px;width:1px;height:14px;background:#9aa0a9;"></div>
<div class="a" style="left:107px;top:1005px;width:1px;height:14px;background:#f6f7f9;"></div>
<div class="a" style="left:240.5px;top:1005px;width:1px;height:14px;background:#9aa0a9;"></div>
<div class="a" style="left:241.5px;top:1005px;width:1px;height:14px;background:#f6f7f9;"></div>
<div class="a" style="left:409.5px;top:1005px;width:1px;height:14px;background:#9aa0a9;"></div>
<div class="a" style="left:410.5px;top:1005px;width:1px;height:14px;background:#f6f7f9;"></div>
<div class="a" style="left:1555.5px;top:1005px;width:1px;height:14px;background:#9aa0a9;"></div>
<div class="a" style="left:1556.5px;top:1005px;width:1px;height:14px;background:#f6f7f9;"></div>
<svg class="a" style="left:252px;top:1006px;" width="26" height="13" viewBox="0 0 26 13"><path d="M3 11q4-5 10-4.500q5 .500 8 4.500v2h-18z" fill="#e9e9ee" stroke="#a9a9b4" stroke-width="1"/><path d="M12 6.500l3 3.500l7-9" fill="none" stroke="#3c4fc0" stroke-width="2"/></svg>
<div class="a" style="left:1562px;top:1005px;width:27px;height:20px;background:linear-gradient(to bottom,#fdeeb5,#fbd978);border:2px solid #e5a930;border-radius:3px;box-sizing:border-box;"></div>
<svg class="a" style="left:1567px;top:1011px;" width="18" height="10" viewBox="0 0 18 10"><rect x="1" y="1" width="16" height="12" fill="#ffffff" stroke="#555" stroke-width="1.500"/><path d="M7 1v12" stroke="#555" stroke-width="1.500"/><rect x="9.500" y="3.500" width="5" height="4" fill="#8aa0c8"/></svg>
<svg class="a" style="left:1594px;top:1011px;" width="18" height="8" viewBox="0 0 18 8"><rect x="1" y="0.750" width="6" height="5" fill="#f4f4f4" stroke="#555" stroke-width="1.300"/><rect x="10" y="0.750" width="6" height="5" fill="#f4f4f4" stroke="#555" stroke-width="1.300"/></svg>
<svg class="a" style="left:1620px;top:1011px;" width="18" height="9" viewBox="0 0 18 9"><path d="M1 1h6.500l1.500 1.500l1.500-1.500h6.500v9h-16z" fill="#f4f4f4" stroke="#666" stroke-width="1.200"/><path d="M9 2.500v7M3 4h4M3 6.500h4M11 4h4M11 6.500h4" stroke="#777" stroke-width="1"/></svg>
<svg class="a" style="left:1647px;top:1011px;" width="18" height="9" viewBox="0 0 18 9"><path d="M1 1.500h16" stroke="#555" stroke-width="2.500"/><rect x="3.500" y="3" width="11" height="8" fill="#f4f4f4" stroke="#555" stroke-width="1.200"/><path d="M6 6.500h6" stroke="#777" stroke-width="1.500"/></svg>
<span class="t" style="left:1681.94px;top:1009px;font:400 15px/20px 'Liberation Sans',sans-serif;color:#2c2c34;letter-spacing:-0.213px;">65%</span>
<div class="a" style="left:1747px;top:1016.5px;width:148px;height:1px;background:#8a8f98;"></div>
<div class="a" style="left:1747px;top:1017.5px;width:148px;height:1px;background:#f4f5f7;"></div>
<div class="a" style="left:1816.5px;top:1011px;width:1px;height:8px;background:#8a8f98;"></div>
<svg class="a" style="left:1723px;top:1006px;" width="25" height="14" viewBox="0 0 25 14"><circle cx="12.500" cy="12.500" r="11" fill="#f4f5f7" stroke="#8a8f98" stroke-width="1.300"/><rect x="7" y="10.500" width="11" height="3" fill="#555"/></svg>
<svg class="a" style="left:1889px;top:1006px;" width="25" height="14" viewBox="0 0 25 14"><circle cx="12.500" cy="12.500" r="11" fill="#f4f5f7" stroke="#8a8f98" stroke-width="1.300"/><path d="M7 12h11M12.500 6.500v11" stroke="#555" stroke-width="3"/></svg>
<div class="a" style="left:1788px;top:1007.5px;width:11.5px;height:14px;background:linear-gradient(to bottom,#ffffff,#e4e6ea);border:1px solid #6f757e;border-radius:1px;box-sizing:border-box;"></div>
<svg class="a" style="left:37px;top:978px;" width="23" height="23" viewBox="0 0 23 23"><defs><linearGradient id="gtn" x1="1" y1="0" x2="0" y2="1"><stop offset="0" stop-color="#2cc2ff"/><stop offset=".5" stop-color="#2a98fa"/><stop offset="1" stop-color="#1d7af2"/></linearGradient></defs><rect x="0" y="0" width="23" height="23" rx="5.500" fill="url(#gtn)"/><path d="M5.900 5.400h10.900v3.800h-3.350v9.500h-4.200v-9.500h-3.350z" fill="#ffffff"/></svg>
<span class="t" style="left:66.30px;top:979px;font:700 17.5px/23px 'Liberation Sans',sans-serif;color:#0a0a0a;letter-spacing:0.597px;-webkit-text-stroke:.7px #0a0a0a;">TEMPLATE</span>
<span class="t" style="left:163.40px;top:979px;font:400 17.5px/23px 'Liberation Sans',sans-serif;color:#111;letter-spacing:0.312px;">.NET</span>
<svg class="a" style="left:0;top:0" width="1920" height="190" viewBox="0 0 1920 190"><defs><linearGradient id="gclip" x1="0" y1="0" x2="1" y2="0"><stop offset="0" stop-color="#e2ad4c"/><stop offset=".15" stop-color="#f0c266"/><stop offset=".85" stop-color="#efc064"/><stop offset="1" stop-color="#d9a548"/></linearGradient><linearGradient id="gpaper" x1="0" y1="0" x2="0" y2="1"><stop offset="0" stop-color="#ffffff"/><stop offset="1" stop-color="#eef2f8"/></linearGradient><linearGradient id="gslide" x1="0" y1="0" x2="0" y2="1"><stop offset="0" stop-color="#ffffff"/><stop offset="1" stop-color="#e4e8f2"/></linearGradient><linearGradient id="gshape" x1="0" y1="0" x2="1" y2="1"><stop offset="0" stop-color="#ffffff"/><stop offset="1" stop-color="#c9d8ec"/></linearGradient><linearGradient id="ggray" x1="0" y1="0" x2="0" y2="1"><stop offset="0" stop-color="#ececec"/><stop offset=".5" stop-color="#c8c9cb"/><stop offset="1" stop-color="#e2e2e3"/></linearGradient><linearGradient id="gyel" x1="0" y1="0" x2="1" y2="1"><stop offset="0" stop-color="#fbe9a2"/><stop offset="1" stop-color="#e9c349"/></linearGradient><linearGradient id="gqs" x1="0" y1="0" x2="0" y2="1"><stop offset="0" stop-color="#dcdcde"/><stop offset="1" stop-color="#cfcfd2"/></linearGradient></defs><rect x="17.5" y="73" width="34.5" height="36" rx="1.5" fill="url(#gclip)" stroke="#c0934a" stroke-width="1"/><rect x="18.5" y="106" width="32.5" height="2.5" fill="#d19f45" opacity=".7"/><path d="M24.5 79.5v-4.5q0-1 1-1h4.5v-2.5q0-1.5 1.5-1.5h5q1.5 0 1.5 1.5v2.5h4.500q1 0 1 1v4.500z" fill="#c9ced4" stroke="#7f8790" stroke-width="1"/><rect x="26.5" y="76.500" width="15" height="2" fill="#f4f6f8"/><rect x="33" y="72.500" width="2.500" height="2.500" fill="#8a6a3a"/><path d="M29.500 86.500h17.500l6.500 6.500v19.500h-24z" fill="url(#gpaper)" stroke="#6d86a8" stroke-width="1"/><path d="M47 86.500v6.500h6.500z" fill="#d6deea" stroke="#6d86a8" stroke-width="1" stroke-linejoin="round"/><path d="M30 112.500h23.500M53.500 93v19.500" stroke="#47668f" stroke-width="1.300" fill="none"/><path d="M33 90.500h10M33 93.500h10M33 96.500h10" stroke="#cfd6df" stroke-width="1"/><path d="M33 99.500h17" stroke="#cfd6df" stroke-width="1"/><path d="M33 102h17M33 105h17M33 108h17" stroke="#c9d3e0" stroke-width="1.800"/><g fill="none" stroke="#9b9b9b" stroke-width="1.600"><path d="M76.500 71.500L82.500 82.500M85 71.500L79 82.500"/><rect x="74.500" y="83" width="4.500" height="6.500" rx="1.500" fill="#e8e8e8"/><rect x="82" y="83" width="4.500" height="6.500" rx="1.500" fill="#e8e8e8"/></g><path d="M77.500 71l3.300 7 3.300-7z" fill="#c9c9c9"/><g stroke="#adadad" stroke-width="1"><path d="M70.500 104h7.500l3 3v10h-10.500z" fill="#eeeeee"/><path d="M72.500 108.500h6M72.500 111h6M72.500 113.500h6" stroke="#c4c4c4"/><path d="M80 108h8l3.500 3.500v9h-11.500z" fill="#e4e4e4" stroke="#9f9f9f"/><path d="M82 112h4M82 114.500h7.500M82 117h7.500" stroke="#b0b0b0" stroke-width="1.500"/></g><g><path d="M70.500 143.500q6-6.500 12.500-5.500l4.500 5q-1 5-7.500 10.500z" fill="#d4d4d5" stroke="#bdbdbf" stroke-width=".8"/><path d="M83 138l4.500 5 5-5.500q1.200-1.800-.500-3.200q-1.600-1.300-3.200.2z" fill="#bcbcbe"/><path d="M73 145.500l6 6M76 142.500l6 6.500" stroke="#f0f0f0" stroke-width="1"/></g><rect x="235.500" y="80.500" width="35.500" height="28.500" rx="1.500" fill="url(#gslide)" stroke="#5f7494" stroke-width="1"/><path d="M236 109.500h35.500M271.700 81v28.500" stroke="#3f5a84" stroke-width="1" opacity=".7" fill="none"/><rect x="240" y="85.500" width="26" height="9" fill="#c3cadb"/><path d="M240 98.500h3M245 98.500h21M240 101.500h3M245 101.500h21" stroke="#c3cadb" stroke-width="1.500"/><g><rect x="230" y="73" width="17" height="17" fill="#f6d54a" opacity=".85"/><path d="M238.500 73v17M230 81.500h17M231.500 74.500l14 14M245.500 74.500l-14 14" stroke="#fff6c0" stroke-width="1.500"/><circle cx="238.500" cy="81.500" r="3.500" fill="#fffbe0"/><path d="M230 73l4 4M247 73l-4 4M230 90l4-4M247 90l-4-4" stroke="#e0a818" stroke-width="1.200"/></g><rect x="288.5" y="72.0" width="20" height="17" rx="1.500" fill="url(#gslide)" stroke="#5f7494" stroke-width="1"/><path d="M289 89.2h20" stroke="#3f5a84" stroke-width="1" opacity=".8"/><rect x="291" y="74.500" width="15" height="3" fill="#8591ad"/><rect x="291" y="79.500" width="6.500" height="7" fill="#a9b0c0"/><path d="M299.500 80.500h6.500M299.500 83.500h6.500M299.500 86h6.500" stroke="#3b57a0" stroke-width="1.500"/><rect x="290.0" y="106.8" width="20" height="16.5" rx="1.500" fill="url(#gslide)" stroke="#5f7494" stroke-width="1"/><path d="M290.5 123.5h20" stroke="#3f5a84" stroke-width="1" opacity=".8"/><rect x="292.500" y="109.300" width="15" height="2.500" fill="#8591ad"/><rect x="292.500" y="113.800" width="6" height="6.500" fill="#a9b0c0"/><path d="M300.500 114.800h6.500M300.500 117.300h6.500M300.500 119.800h6.500" stroke="#3b57a0" stroke-width="1.500"/><path d="M288 104.500l5.500-4v2.500q6-.5 6.500 4.500q-2-2.500-6.500-2v3z" fill="#3f78d8" stroke="#2a59b0" stroke-width=".8"/><rect x="288" y="133" width="9" height="9" fill="#f1cf4a" opacity=".9"/><path d="M292.500 133v9M288 137.500h9M289 134l7 7M296 134l-7 7" stroke="#fff3b0" stroke-width="1"/><rect x="294.500" y="137.500" width="15" height="4.500" fill="#c9cdd3" stroke="#9aa0a8" stroke-width="1"/><rect x="297.500" y="146.500" width="12" height="8.500" fill="url(#gslide)" stroke="#5f7494" stroke-width="1"/><path d="M297 155.800h13" stroke="#3f5a84" stroke-width="1.200"/><rect x="299" y="148" width="9" height="2" fill="#aab3c8"/><rect x="694.500" y="82" width="17" height="11.500" fill="#f3f3f4" stroke="#a9a9ad" stroke-width="1"/><g transform="rotate(-32 709 97)"><rect x="701.500" y="92.500" width="15" height="8.500" rx="3.500" fill="#e4e2e4" stroke="#c2bfc3" stroke-width="1"/></g><circle cx="745" cy="85" r="1.300" fill="#9a9a9a"/><path d="M750 85h11" stroke="#6c6c6c" stroke-width="1.6"/><path d="M797 85h13" stroke="#6c6c6c" stroke-width="1.6"/><circle cx="745" cy="92" r="1.300" fill="#9a9a9a"/><path d="M750 92h11" stroke="#6c6c6c" stroke-width="1.6"/><path d="M797 92h13" stroke="#6c6c6c" stroke-width="1.6"/><circle cx="745" cy="99.4" r="1.300" fill="#9a9a9a"/><path d="M750 99.4h11" stroke="#6c6c6c" stroke-width="1"/><path d="M797 99.4h13" stroke="#6c6c6c" stroke-width="1"/><path d="M853 84.500h4M861 84.500h12" stroke="#6c6c6c" stroke-width="1"/><path d="M861 88h12M861 91h12M861 94h8" stroke="#6c6c6c" stroke-width="2"/><path d="M853 97.500h20M853 100.500h4M861 100.500h12" stroke="#6c6c6c" stroke-width="1"/><path d="M860.5 81v22" stroke="#555" stroke-width="1" stroke-dasharray="1.500 2"/><path d="M859 91h-5v-3l-4 3.500l4 3.500v-3h5z" fill="#a8a8a8"/><path d="M884 84.500h4M892 84.500h12" stroke="#6c6c6c" stroke-width="1"/><path d="M892 88h12M892 91h12M892 94h8" stroke="#6c6c6c" stroke-width="2"/><path d="M884 97.500h20M884 100.500h4M892 100.500h12" stroke="#6c6c6c" stroke-width="1"/><path d="M891.5 81v22" stroke="#555" stroke-width="1" stroke-dasharray="1.500 2"/><path d="M881 91h5v-3l4 3.500l-4 3.500v-3h-5z" fill="#a8a8a8"/><path d="M939 86.200h10.500M939 90.400h10.500M939 99.400h10.500" stroke="#6c6c6c" stroke-width="1"/><path d="M939 95h10.500" stroke="#6c6c6c" stroke-width="1.800"/><path d="M932.500 82v9M932.500 94v9" stroke="#9a9a9a" stroke-width="1.600"/><path d="M929.500 86l3-4.500l3 4.500zM929.500 99l3 4.500l3-4.500z" fill="#9a9a9a"/><path d="M743 126.5H763" stroke="#6c6c6c" stroke-width="1.1"/><path d="M743 129.4H757" stroke="#6c6c6c" stroke-width="1.7"/><path d="M743 132.2H763" stroke="#6c6c6c" stroke-width="1.7"/><path d="M743 135H757" stroke="#6c6c6c" stroke-width="1.7"/><path d="M743 137.8H763" stroke="#6c6c6c" stroke-width="1.7"/><path d="M743 140.6H757" stroke="#6c6c6c" stroke-width="1.1"/><path d="M775 126.5H795" stroke="#6c6c6c" stroke-width="1.1"/><path d="M778 129.4H792" stroke="#6c6c6c" stroke-width="1.7"/><path d="M775 132.2H795" stroke="#6c6c6c" stroke-width="1.7"/><path d="M778 135H792" stroke="#6c6c6c" stroke-width="1.7"/><path d="M775 137.8H795" stroke="#6c6c6c" stroke-width="1.7"/><path d="M778 140.6H792" stroke="#6c6c6c" stroke-width="1.1"/><path d="M810 126.5H830" stroke="#6c6c6c" stroke-width="1.1"/><path d="M815 129.4H830" stroke="#6c6c6c" stroke-width="1.7"/><path d="M810 132.2H830" stroke="#6c6c6c" stroke-width="1.7"/><path d="M815 135H830" stroke="#6c6c6c" stroke-width="1.7"/><path d="M810 137.8H830" stroke="#6c6c6c" stroke-width="1.7"/><path d="M815 140.6H830" stroke="#6c6c6c" stroke-width="1.1"/><path d="M843 126.5H863" stroke="#6c6c6c" stroke-width="1.1"/><path d="M843 129.4H863" stroke="#6c6c6c" stroke-width="1.7"/><path d="M843 132.2H863" stroke="#6c6c6c" stroke-width="1.7"/><path d="M843 135H863" stroke="#6c6c6c" stroke-width="1.7"/><path d="M843 137.8H863" stroke="#6c6c6c" stroke-width="1.7"/><path d="M843 140.6H863" stroke="#6c6c6c" stroke-width="1.1"/><path d="M888 126.5H896.5" stroke="#6c6c6c" stroke-width="1.1"/><path d="M888 129.4H896.5" stroke="#6c6c6c" stroke-width="1.7"/><path d="M888 132.2H896.5" stroke="#6c6c6c" stroke-width="1.7"/><path d="M888 135H896.5" stroke="#6c6c6c" stroke-width="1.7"/><path d="M888 137.8H896.5" stroke="#6c6c6c" stroke-width="1.7"/><path d="M888 140.6H896.5" stroke="#6c6c6c" stroke-width="1.1"/><path d="M898.5 126.5H907" stroke="#6c6c6c" stroke-width="1.1"/><path d="M898.5 129.4H907" stroke="#6c6c6c" stroke-width="1.7"/><path d="M898.5 132.2H907" stroke="#6c6c6c" stroke-width="1.7"/><path d="M898.5 135H907" stroke="#6c6c6c" stroke-width="1.7"/><path d="M898.5 137.8H907" stroke="#6c6c6c" stroke-width="1.7"/><path d="M898.5 140.6H907" stroke="#6c6c6c" stroke-width="1.1"/><path d="M973.5 70.500V89" stroke="#7a7a7a" stroke-width="1"/><path d="M971.5 87.500h4l-2 3z" fill="#7a7a7a"/><path d="M979.5 70.500V89" stroke="#7a7a7a" stroke-width="1"/><path d="M977.5 87.500h4l-2 3z" fill="#7a7a7a"/><path d="M985.500 80V89" stroke="#666" stroke-width="1.800"/><path d="M983 87.500h5l-2.500 3z" fill="#666"/><path d="M991.500 80V89" stroke="#7a7a7a" stroke-width="1"/><path d="M989.500 87.500h4l-2 3z" fill="#7a7a7a"/><path d="M984 79.500l4-9l4.500 9M985.500 76.500h5.500" fill="none" stroke="#888" stroke-width="1.100"/><rect x="971.500" y="104.500" width="22" height="17.500" fill="url(#ggray)" stroke="#b5b5b8" stroke-width="1"/><path d="M974 110h2M978 110h13M974 113.500h2M978 113.500h13M974 117h2M978 117h13" stroke="#a9a9ac" stroke-width="1.200"/><path d="M971.500 122.500h22" stroke="#8f8f93" stroke-width="1.500"/><path d="M983 101v3M981 103.500h4l-2 2.500zM983 125v-3M981 122.500h4l-2-2.500z" fill="#9a9a9d" stroke="#9a9a9d" stroke-width=".800"/><path d="M971.500 133.500h14.500q3 0 4 4v3.500h-10.500v6h-8l3.500-6.500z" fill="#c9c9cb"/><rect x="980" y="140.500" width="13.500" height="15" fill="#ededee" stroke="#c2c2c5" stroke-width="1"/><path d="M983 145h2M987 145h4M983 148.500h2M987 148.500h4M983 152h2M987 152h4" stroke="#b9b9bc" stroke-width="1.200"/><rect x="1176.500" y="70.500" width="194.500" height="85" fill="#ffffff" stroke="#c3cad4" stroke-width="1"/><path d="M1176.500 156h194.500" stroke="#aab2bd" stroke-width="1"/><rect x="1351.500" y="70.500" width="19.500" height="29" fill="#f7f8fa" stroke="#d5dae2" stroke-width="1"/><rect x="1351.500" y="99.500" width="19.500" height="28" fill="#f1f3f6" stroke="#c3cad4" stroke-width="1"/><rect x="1351.500" y="128.500" width="19.500" height="27" fill="#f4f5f8" stroke="#c3cad4" stroke-width="1"/><path d="M1358 86.200h6.600l-3.300-3.200z" fill="#c6c9cf"/><path d="M1357.800 87h7" stroke="#c6c9cf" stroke-width="1"/><path d="M1358 112h6.600l-3.300 4z" fill="#555"/><path d="M1357.800 111.300h7" stroke="#555" stroke-width="1.200"/><path d="M1356.500 137.500h9.500M1357.500 141h7.500" stroke="#555" stroke-width="1.300"/><path d="M1358 142h6.600l-3.300 3.800z" fill="#555"/><g fill="url(#gshape)" stroke="#24416b" stroke-width="1.400" stroke-linejoin="miter"><rect x="1180.800" y="75" width="20.500" height="17.500" fill="#e8eef7" stroke-width="1.800"/><path d="M1192 81h7M1192 84h7M1184 87.500h15M1184 90h15" stroke="#8ea3c8" stroke-width="1" fill="none"/><path d="M1183.500 84l2.700-6l2.700 6M1184.500 82h4.500" stroke="#222" stroke-width="1.300" fill="none"/><path d="M1210.500 74.500L1230 93.500" fill="none"/><path d="M1239 74.500L1257.500 92.500" fill="none"/><path d="M1259 94l-5.500-.500l5-5z" fill="#24416b" stroke-width=".500"/><rect x="1266.800" y="76.800" width="21.500" height="15.500"/><ellipse cx="1305.500" cy="84.500" rx="10" ry="7.800"/><rect x="1323.700" y="76.800" width="21.500" height="15.500" rx="4"/><path d="M1192.500 103.500L1201.500 122H1183.500z"/><path d="M1209 105h10.800v15.500h12" fill="none" stroke-width="1.500"/><path d="M1238 105h10.500v15.500h8" fill="none" stroke-width="1.500"/><path d="M1260 120.500l-4.500-3.500v7z" fill="#24416b" stroke-width=".500"/><path d="M1266.800 107h10v-5.500l10.700 10.500l-10.700 10.500v-5.500h-10z"/><path d="M1300.500 102h10v10h5.500l-10.500 10.500l-10.500-10.500h5.500z"/><path d="M1326.500 110l5-5.500h10q-2 5 3 6.500v8.500h-18z"/><path d="M1190 130.500q1.500 5-2.500 6.500q-2.500 2.500 1 3.500q4 .500 5-3q3.500-1 2.500 3q-1 3.500-3 5.500q-1 3.500 2.500 3q3-1.500 2-4.500q-2.500-1-3 2l3 4" fill="none" stroke-width="1.200"/><path d="M1210 133.500q17 0 19.500 15.500" fill="none" stroke-width="1.300"/><path d="M1238 143q5.500-21 11.500-4.500q4.500 12 10 10" fill="none" stroke-width="1.500"/><path d="M1279.500 130.500q-5.500-.500-5.500 4v3q0 3-4 3q4 0 4 3v3.500q0 4.500 5.500 4" fill="none" stroke-width="1.300"/><path d="M1301.500 130.500q5.500-.500 5.500 4v3q0 3 4 3q-4 0-4 3v3.500q0 4.500-5.500 4" fill="none" stroke-width="1.300"/><path d="M1334.0 131.0L1336.7 138.5L1344.7 138.7L1338.4 143.6L1340.6 151.3L1334.0 146.8L1327.4 151.3L1329.6 143.6L1323.3 138.7L1331.3 138.5z"/></g><linearGradient id="gsq" x1="0" y1="0" x2="0" y2="1"><stop offset="0" stop-color="#eceded"/><stop offset=".48" stop-color="#d4d6d7"/><stop offset=".52" stop-color="#bfc2c4"/><stop offset="1" stop-color="#dcddde"/></linearGradient><rect x="1395" y="77.500" width="25.500" height="26" fill="url(#gyel)" stroke="#c9a73c" stroke-width="1"/><rect x="1396" y="101" width="24" height="2" fill="#d9b84a" opacity=".8"/><rect x="1386.800" y="70.800" width="18.500" height="18.500" fill="url(#gsq)" stroke="#4d586e" stroke-width="1"/><path d="M1387 90h19M1406 71v19" stroke="#2c3850" stroke-width="1" fill="none"/><rect x="1410" y="93.800" width="18.500" height="18.500" fill="url(#gsq)" stroke="#4d586e" stroke-width="1"/><path d="M1410 113h19M1429 94v19" stroke="#2c3850" stroke-width="1" fill="none"/><rect x="1452.500" y="71.500" width="39" height="40.500" rx="7" fill="url(#gqs)" stroke="#c4c3c6" stroke-width="1.200"/><path d="M1493.500 84q1.500 1.500.500 3.500l-9 13l-3-2.500l9.500-13q1-1.500 2-1z" fill="#e6e6e8" stroke="#c9c9cc" stroke-width=".800"/><path d="M1482 98l3.500 3q-3 8-17 12q7-5 8-11.500q2.500-4 5.500-3.500z" fill="#bdbdc0"/><rect x="1507" y="87.500" width="22" height="5.200" fill="#e3e3e6"/><path d="M1510.500 80l7-6l7.500 6.500l-7 6.500z" fill="#eeeeef" stroke="#b4b4b8" stroke-width="1"/><path d="M1516 75v-3.500q1.500-2 3 0v5" fill="none" stroke="#b4b4b8" stroke-width="1.200"/><path d="M1525 79.500q3.500-.500 3.500 3v3.500q-2.500-1.500-2-4z" fill="#bcbcc0"/><path d="M1518 105h-10.500v11.500h10" fill="#ffffff" stroke="#8d8d90" stroke-width="1.200"/><path d="M1514.500 117l1.500-4l9.500-9q1.800-.500 2.500 1.500l-9.500 9.500z" fill="#d9d9dc" stroke="#b0b0b4" stroke-width=".900"/><rect x="1507" y="119.200" width="22" height="4.500" fill="#9e9ea1"/><ellipse cx="1519" cy="149.500" rx="9" ry="3.200" fill="#e4e4e6"/><path d="M1510.500 135.500h13q3 0 2.500 3l-1.500 8q-.500 2.500-3 2.500h-11q-3.500 0-3-3l1-8q.300-2.500 2.500-2.500z" fill="#e9e9eb" stroke="#cfcfd2" stroke-width="1"/><path d="M1508 145l-.300 1.500q-.500 2.800 3 2.800h11q2.500 0 3-2.500l.300-1.800z" fill="#bfbfc3"/><path d="M1680.5 71h4.500l1 3.500l.500 8h-8l.800-8z" fill="#2d4a9f"/><rect x="1680.5" y="74" width="5" height="1.300" fill="#8ea3dd"/><rect x="1677.5" y="82.500" width="8.500" height="7" fill="#f1f4fb" stroke="#2d4a9f" stroke-width="1.200"/><rect x="1678.2" y="83.200" width="3" height="5.600" fill="#aab8e2"/><path d="M1692.5 71h4.500l1 3.500l.500 8h-8l.800-8z" fill="#2d4a9f"/><rect x="1692.5" y="74" width="5" height="1.300" fill="#8ea3dd"/><rect x="1689.5" y="82.500" width="8.500" height="7" fill="#f1f4fb" stroke="#2d4a9f" stroke-width="1.200"/><rect x="1690.2" y="83.200" width="3" height="5.600" fill="#aab8e2"/><rect x="1685" y="77" width="5" height="5" fill="#2d4a9f"/><path d="M1679 113.500v3.500q0 1.500 1.500 1.500h3.500" fill="none" stroke="#3f6fc4" stroke-width="1.300"/><path d="M1683 116.500l2.500 2l-2.500 2z" fill="#3f6fc4"/><path d="M1682.500 134.500v15.500l3.500-3.500l3 6.500l2.500-1.200l-3-6.300h5z" fill="#ffffff" stroke="#4c6a98" stroke-width="1.200" stroke-linejoin="round"/></svg>
<span class="t" style="left:1677.16px;top:100px;font:700 11.5px/15px 'Liberation Sans',sans-serif;color:#4a4a4a;letter-spacing:0.000px;">a</span>
<span class="t" style="left:1684.24px;top:100px;font:700 11.5px/15px 'Liberation Sans',sans-serif;color:#c0c0c0;letter-spacing:0.000px;">b</span>
<span class="t" style="left:1686.16px;top:111px;font:700 11.5px/15px 'Liberation Sans',sans-serif;color:#333;letter-spacing:0.000px;">a</span>
<span class="t" style="left:1693.05px;top:111px;font:700 11.5px/15px 'Liberation Sans',sans-serif;color:#1e8a2e;letter-spacing:0.000px;">c</span>
<span class="t" style="left:696.48px;top:82px;font:400 9px/12px 'Liberation Sans',sans-serif;color:#8d8d92;letter-spacing:0.000px;">Aa</span>
<span class="t" style="left:789.79px;top:81px;font:700 6.5px/8px 'Liberation Sans',sans-serif;color:#8a8a8a;letter-spacing:0.000px;">1</span>
<span class="t" style="left:789.97px;top:88px;font:700 6.5px/8px 'Liberation Sans',sans-serif;color:#8a8a8a;letter-spacing:0.000px;">2</span>
<span class="t" style="left:790.05px;top:95px;font:700 6.5px/8px 'Liberation Sans',sans-serif;color:#8a8a8a;letter-spacing:0.000px;">3</span>
</div>
<div class="fr" style="left:0;top:0;width:1920px;height:15px"></div><div class="fr" style="left:0;top:1019px;width:1920px;height:15px"></div><div class="fr" style="left:0;top:0;width:15px;height:1034px"></div><div class="fr" style="left:1905px;top:0;width:15px;height:1034px"></div>
</body></html>
